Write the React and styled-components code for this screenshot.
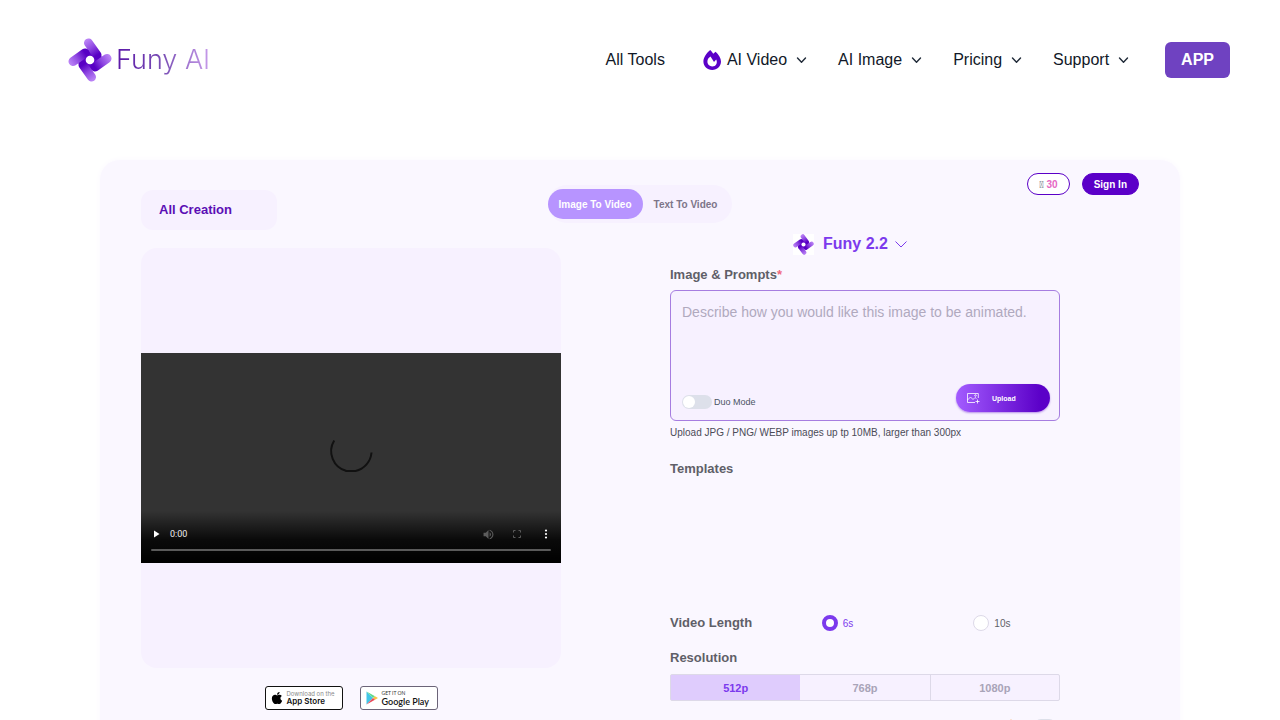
import React, { useId, useState } from 'react';
import styled, { createGlobalStyle } from 'styled-components';

const COLORS = {
  PURPLE: '#5b00c8',
  VIOLET: '#7c3aed',
  BUTTON: '#6f42c1',
  PANEL: '#faf7ff',
  CARD: '#f7f1ff',
  TEXT: '#111827',
  LABEL: '#5f5f68',
  MUTED: '#a9a4b8',
  LINE: '#ddd9e8',
};

const GlobalStyle = createGlobalStyle`
  *, *::before, *::after {
    box-sizing: border-box;
  }

  body {
    margin: 0;
    background: #fff;
    color: ${COLORS.TEXT};
    font-family: 'Liberation Sans', Arial, sans-serif;
  }

  button, input, textarea {
    font-family: inherit;
  }
`;

const Header = styled.header`
  display: flex;
  align-items: center;
  justify-content: space-between;
  height: 120px;
  padding: 0 50px 0 68px;
`;

const Brand = styled.a`
  display: flex;
  align-items: center;
  gap: 4px;
  text-decoration: none;
`;

const BrandName = styled.span`
  font-family: Inter, sans-serif;
  font-size: 27px;
  font-weight: 300;
  line-height: 36px;
  color: transparent;
  background: linear-gradient(90deg, #5a16a8, #7a4fb5 50%, #c79bea);
  background-clip: text;
`;

const Nav = styled.nav`
  display: flex;
  align-items: center;
  gap: 26px;
`;

const NavLink = styled.a`
  display: flex;
  align-items: center;
  gap: 5px;
  margin-right: ${({ $wide }) => ($wide ? '12px' : '0')};
  color: inherit;
  font-size: 16px;
  line-height: 24px;
  text-decoration: none;
`;

const AppButton = styled.button`
  height: 36px;
  margin-left: 5px;
  padding: 0 16px;
  border: 0;
  border-radius: 6px;
  background: ${COLORS.BUTTON};
  color: #fff;
  font-size: 16px;
  font-weight: 700;
`;

const Panel = styled.main`
  margin: 40px 100px 0;
  padding: 13px 41px 40px;
  border-radius: 20px;
  background: ${COLORS.PANEL};
  box-shadow: 0 0 6px ${COLORS.PANEL};
`;

const Toolbar = styled.div`
  display: grid;
  grid-template-columns: 1fr auto 1fr;
  align-items: start;
`;

const CreationTab = styled.button`
  justify-self: start;
  width: 136px;
  height: 40px;
  margin-top: 17px;
  padding: 0 18px 2px;
  border: 0;
  border-radius: 12px;
  background: ${COLORS.CARD};
  color: #5b0fb5;
  font-size: 13px;
  font-weight: 700;
  text-align: left;
`;

const ModeTabs = styled.div`
  display: flex;
  margin-top: 12px;
  padding: 4px 4px 4px 0;
  border-radius: 19px;
  background: ${COLORS.CARD};
`;

const ModeTab = styled.button`
  height: 30px;
  padding: 0 11px;
  border: 0;
  border-radius: 15px;
  background: ${({ $active }) => ($active ? '#b794ff' : 'transparent')};
  color: ${({ $active }) => ($active ? '#fff' : '#7d7589')};
  font-size: 10px;
  font-weight: 700;
`;

const Account = styled.div`
  display: flex;
  justify-self: end;
  gap: 12px;
`;

const Pill = styled.button`
  height: 22px;
  padding: 0 11px;
  border: 1px solid ${COLORS.PURPLE};
  border-radius: 11px;
  background: ${({ $filled }) => ($filled ? COLORS.PURPLE : '#fff')};
  color: ${({ $filled }) => ($filled ? '#fff' : '#4b5563')};
  font-size: 10px;
  font-weight: 700;
`;

const CoinGlyph = styled.span`
  font-family: Roboto, sans-serif;
  font-weight: 400;
`;

const Credits = styled.span`
  color: #e667c4;
`;

const Columns = styled.div`
  display: grid;
  grid-template-columns: 14fr 13fr;
  gap: 109px;
  padding-right: 79px;
`;

const Preview = styled.section`
  margin-top: 18px;
`;

const PreviewCard = styled.div`
  display: flex;
  align-items: center;
  aspect-ratio: 1;
  border-radius: 16px;
  background: ${COLORS.CARD};
`;

const Player = styled.div`
  position: relative;
  display: grid;
  place-items: center;
  width: 100%;
  aspect-ratio: 2;
  background: #333;
`;

const PlayerControls = styled.div`
  position: absolute;
  inset: auto 0 0;
  padding: 12px 10px;
  background: linear-gradient(transparent, rgba(0, 0, 0, 0.8) 55%, #000);
`;

const ControlRow = styled.div`
  display: flex;
  align-items: center;
  height: 22px;
`;

const ControlGroup = styled.div`
  display: flex;
  gap: 19px;
`;

const ControlButton = styled.button`
  display: flex;
  align-items: center;
  justify-content: center;
  width: 10px;
  height: 20px;
  padding: 0;
  border: 0;
  background: none;
  color: ${({ disabled }) => (disabled ? '#5c5c5c' : '#fff')};

  svg {
    flex: none;
  }
`;

const Time = styled.span`
  margin: 0 auto 0 9px;
  color: #eee;
  font-family: Roboto, sans-serif;
  font-size: 9px;
`;

const Seek = styled.input`
  display: block;
  width: 100%;
  height: 2px;
  margin: 4px 0 0;
  appearance: none;
  border-radius: 1px;
  background: #5a5a5a;

  &::-webkit-slider-thumb {
    appearance: none;
  }
`;

const Stores = styled.div`
  display: flex;
  justify-content: center;
  gap: 17px;
  margin-top: 18px;
`;

const StoreBadge = styled.a`
  display: flex;
  align-items: center;
  gap: 4px;
  width: 78px;
  height: 24px;
  padding: 0 5px;
  border: 1px solid ${({ $soft }) => ($soft ? '#6b6478' : '#111')};
  border-radius: 3px;
  background: #fff;
  color: #111;
  text-decoration: none;
`;

const StoreText = styled.span`
  display: flex;
  flex-direction: column;
  font-family: ${({ $soft }) => ($soft ? 'Lato' : 'Inter')}, sans-serif;
  font-size: ${({ $soft }) => ($soft ? '9px' : '8px')};
  font-weight: 600;
  line-height: 9px;
  white-space: nowrap;
`;

const StoreNote = styled.small`
  color: ${({ $soft }) => ($soft ? '#333' : '#8a8a8a')};
  font-size: ${({ $soft }) => ($soft ? '5px' : '6px')};
  font-weight: 400;
  line-height: 7px;
`;

const Form = styled.form`
  display: flex;
  flex-direction: column;
  padding-top: 3px;
`;

const ModelButton = styled.button`
  display: flex;
  align-items: center;
  align-self: center;
  height: 22px;
  margin: 0 30px 12px 0;
  padding: 0;
  border: 0;
  background: none;
  color: ${COLORS.VIOLET};
  font-size: 16px;
  font-weight: 700;

  svg:first-child {
    margin-right: 9px;
    background: #fff;
  }

  svg:last-child {
    margin-left: 7px;
  }
`;

const Label = styled.label`
  margin: 0;
  color: ${COLORS.LABEL};
  font-size: 13px;
  font-weight: 700;
  line-height: 16px;
`;

const Required = styled.span`
  color: #f0687c;
`;

const PromptBox = styled.div`
  margin-top: 7px;
  padding: 10px 9px 8px 11px;
  border: 1px solid #a67de0;
  border-radius: 6px;
  background: ${COLORS.CARD};
`;

const PromptInput = styled.textarea`
  display: block;
  width: 100%;
  height: 83px;
  padding: 0;
  border: 0;
  outline: 0;
  resize: none;
  background: none;
  color: ${COLORS.LABEL};
  font-size: 14px;
  line-height: 22px;

  &::placeholder {
    color: #b0a9be;
  }
`;

const PromptFooter = styled.div`
  display: flex;
  align-items: center;
  justify-content: space-between;
`;

const SwitchLabel = styled.label`
  display: flex;
  align-items: center;
  gap: 2px;
  padding-top: 8px;
  color: #4b5563;
  font-size: 9px;
`;

const Switch = styled.input`
  display: flex;
  width: ${({ $small }) => ($small ? '22px' : '30px')};
  height: 14px;
  margin: 0;
  padding: 1px;
  appearance: none;
  border-radius: 7px;
  background: #dde0ea;

  &::before {
    content: '';
    width: 12px;
    height: 12px;
    border-radius: 50%;
    background: #fff;
  }

  &:checked {
    justify-content: flex-end;
    background: ${COLORS.VIOLET};
  }
`;

const UploadButton = styled.button`
  display: flex;
  align-items: center;
  gap: 12px;
  width: 94px;
  height: 28px;
  padding: 0 10px;
  border: 0;
  border-radius: 14px;
  background: linear-gradient(90deg, #a35cff, ${COLORS.PURPLE} 90%);
  box-shadow: 0 1px 2px rgba(91, 0, 200, 0.4);
  color: #fff;
  font-size: 7px;
  font-weight: 700;
`;

const Hint = styled.p`
  margin: 6px 0 22px;
  color: #4b4b57;
  font-size: 10px;
  line-height: 12px;
`;

const TemplateList = styled.div`
  min-height: 138px;
`;

const LengthRow = styled.div`
  display: grid;
  grid-template-columns: 7fr 7fr 4fr;
  align-items: center;
  margin-bottom: 19px;
`;

const RadioLabel = styled.label`
  display: flex;
  align-items: center;
  gap: 5px;
  color: ${({ $active }) => ($active ? COLORS.VIOLET : '#5f5f68')};
  font-size: 10px;
`;

const Radio = styled.input`
  width: 16px;
  height: 16px;
  margin: 0;
  appearance: none;
  border: 1px solid ${COLORS.LINE};
  border-radius: 50%;
  background: #fff;

  &:checked {
    border: 4px solid ${COLORS.VIOLET};
  }
`;

const Segments = styled.div`
  display: grid;
  grid-template-columns: repeat(3, 1fr);
  height: 27px;
  margin-top: 8px;
  border: 1px solid ${COLORS.LINE};
  border-radius: 2px;
  background: ${COLORS.CARD};
`;

const Segment = styled.button`
  border: 0;
  border-left: ${({ $divided }) => ($divided ? `1px solid ${COLORS.LINE}` : '0')};
  background: ${({ $active }) => ($active ? '#dfccfd' : 'transparent')};
  color: ${({ $active }) => ($active ? COLORS.VIOLET : COLORS.MUTED)};
  font-size: 11px;
  font-weight: 700;
`;

const PremiumRow = styled.div`
  display: flex;
  align-items: center;
  justify-content: flex-end;
  gap: 16px;
  margin: 18px 4px 0 0;
`;

const BLADES = [0, 90, 180, 270];

const Pinwheel = ({ size }) => {
  const id = useId();

  return (
    <svg width={size} height={size} viewBox="-22 -22 44 44" aria-hidden="true">
      <defs>
        <linearGradient id={id} gradientUnits="userSpaceOnUse" x1="-3" y1="-20" x2="7" y2="-5">
          <stop offset="0" stopColor="#b981f5" />
          <stop offset="0.5" stopColor="#8f48e2" />
          <stop offset="1" stopColor="#5800c4" />
        </linearGradient>
      </defs>
      <path d="M-8 -8L3 -12L12 -3L8 8L-3 12L-12 3Z" fill="#5f04c8" />
      {BLADES.map((angle) => (
        <path
          key={angle}
          d="M-1.5 -17L7 -5"
          stroke={`url(#${id})`}
          strokeWidth="9"
          strokeLinecap="round"
          transform={`rotate(${angle})`}
        />
      ))}
      <circle r="4.3" fill="#fff" />
    </svg>
  );
};

const Chevron = () => (
  <svg width="20" height="20" viewBox="0 0 20 20" fill="none" aria-hidden="true">
    <path d="M5.5 8L9.5 12.2L13.5 8" stroke="#1f2937" strokeWidth="1.4" strokeLinecap="round" strokeLinejoin="round" />
  </svg>
);

const Flame = () => (
  <svg width="19" height="20" viewBox="0 0 19 20" aria-hidden="true">
    <path
      fill={COLORS.PURPLE}
      fillRule="evenodd"
      d="M7.2 0C8.4 1 9.400 2.300 10.200 3.700L12.600 1.800C15.700 4.600 18 8.300 18 11.500C18 16.300 14.200 20 9.200 20C4.200 20 .4 16.300 .4 11.500C.4 7.600 3.400 3.200 7.200 0ZM4.700 9.800C3.600 13.600 5.900 16.400 9.300 16.400C13 16.400 14.900 13 13.200 9.400L11 12L7.500 6.600C6.200 7.700 5.100 8.500 4.700 9.800Z"
    />
  </svg>
);

const Spinner = () => (
  <svg width="48" height="60" viewBox="0 0 48 60" fill="none" aria-hidden="true">
    <path
      d="M7.2 12.5A20.5 20.5 0 0 0 19.5 43M28.5 43A20.5 20.5 0 0 0 44.5 24.5M18.5 43H29.5"
      stroke="#111"
      strokeWidth="2"
    />
  </svg>
);

const PlayIcon = () => (
  <svg width="7" height="8" viewBox="0 0 7 8" aria-hidden="true">
    <path d="M1 .5L6.5 4L1 7.5Z" fill="currentColor" />
  </svg>
);

const VolumeIcon = () => (
  <svg width="11" height="11" viewBox="2 2 20 20" aria-hidden="true">
    <path
      fill="currentColor"
      d="M3 9v6h4l5 5V4L7 9H3zm13.5 3c0-1.77-1.02-3.29-2.5-4.03v8.05c1.48-.73 2.5-2.25 2.5-4.02zM14 3.23v2.06c2.89.86 5 3.54 5 6.71s-2.11 5.85-5 6.71v2.06c4.01-.91 7-4.49 7-8.77s-2.99-7.86-7-8.77z"
    />
  </svg>
);

const FullscreenIcon = () => (
  <svg width="8" height="8" viewBox="0 0 8 8" fill="none" aria-hidden="true">
    <path
      d="M.5 2.5V.5H2.500M5.500 .5H7.500V2.500M7.500 5.500V7.500H5.500M2.500 7.500H.5V5.500"
      stroke="currentColor"
    />
  </svg>
);

const MenuIcon = () => (
  <svg width="4" height="10" viewBox="0 0 4 10" fill="currentColor" aria-hidden="true">
    <circle cx="2" cy="1.5" r="1.1" />
    <circle cx="2" cy="5" r="1.1" />
    <circle cx="2" cy="8.5" r="1.1" />
  </svg>
);

const AppleIcon = () => (
  <svg width="12" height="14" viewBox="0 0 384 512" aria-hidden="true">
    <path d="M318.7 268.7c-.2-36.7 16.4-64.4 50-84.8-18.8-26.9-47.2-41.7-84.7-44.6-35.5-2.8-74.3 20.7-88.5 20.7-15 0-49.4-19.7-76.4-19.7C63.3 141.2 4 184.8 4 273.5q0 39.3 14.4 81.2c12.8 36.7 59 126.7 107.2 125.2 25.2-.6 43-17.9 75.8-17.9 31.8 0 48.3 17.9 76.400 17.900 48.600-.7 90.400-82.500 102.600-119.300-65.200-30.700-61.700-90-61.700-91.900zm-56.600-164.200c27.300-32.400 24.800-61.900 24-72.500-24.100 1.400-52 16.400-67.900 34.900-17.500 19.800-27.800 44.300-25.600 71.900 26.100 2 49.900-11.400 69.500-34.300z" />
  </svg>
);

const GooglePlayIcon = () => (
  <svg width="12" height="14" viewBox="0 0 12 14" aria-hidden="true">
    <path d="M.5 .5V13.5L7 7Z" fill="#42c6e8" />
    <path d="M.5 .5L9 5.2L7 7Z" fill="#5fd98b" />
    <path d="M9 5.2L12 7L9 8.8L7 7Z" fill="#f6c544" />
    <path d="M.5 13.5L9 8.8L7 7Z" fill="#ea4b5b" />
  </svg>
);

const UploadIcon = () => (
  <svg width="14" height="12" viewBox="0 0 14 12" fill="none" stroke="#fff" strokeWidth="0.8" aria-hidden="true">
    <path d="M12.3 6V1.5H1.5V10.5H9" />
    <path d="M1.5 8L4.5 5L7 7.5L9 5.5L10.5 6.5M11.500 7.500V11.500M9.500 9.500H13.500" />
    <circle cx="9.5" cy="3.5" r="0.8" />
  </svg>
);

const ModelChevron = () => (
  <svg width="12" height="8" viewBox="0 0 12 8" fill="none" aria-hidden="true">
    <path d="M.5 1.5L6 7L11.5 1.5" stroke="currentColor" />
  </svg>
);

const Crown = () => (
  <svg width="14" height="14" viewBox="0 0 14 14" aria-hidden="true">
    <path d="M7 0L9.5 5L13.5 3L12 12H2L.5 3L4.5 5Z" fill="#f5a65b" />
  </svg>
);

const RESOLUTIONS = ['512p', '768p', '1080p'];
const LENGTHS = ['6s', '10s'];
const MODES = ['Image To Video', 'Text To Video'];

const SiteHeader = () => (
  <Header>
    <Brand href="#">
      <Pinwheel size={44} />
      <BrandName>Funy AI</BrandName>
    </Brand>
    <Nav>
      <NavLink href="#" $wide>All Tools</NavLink>
      <NavLink href="#"><Flame />AI Video<Chevron /></NavLink>
      <NavLink href="#">AI Image<Chevron /></NavLink>
      <NavLink href="#">Pricing<Chevron /></NavLink>
      <NavLink href="#">Support<Chevron /></NavLink>
      <AppButton type="button">APP</AppButton>
    </Nav>
  </Header>
);

const VideoPreview = () => (
  <Preview>
    <PreviewCard>
      <Player>
        <Spinner />
        <PlayerControls>
          <ControlRow>
            <ControlButton type="button" aria-label="Play"><PlayIcon /></ControlButton>
            <Time>0:00</Time>
            <ControlGroup>
              <ControlButton type="button" aria-label="Mute" disabled><VolumeIcon /></ControlButton>
              <ControlButton type="button" aria-label="Full screen" disabled><FullscreenIcon /></ControlButton>
              <ControlButton type="button" aria-label="More options"><MenuIcon /></ControlButton>
            </ControlGroup>
          </ControlRow>
          <Seek type="range" aria-label="Seek" defaultValue={0} />
        </PlayerControls>
      </Player>
    </PreviewCard>
    <Stores>
      <StoreBadge href="#">
        <AppleIcon />
        <StoreText>
          <StoreNote>Download on the</StoreNote>
          App Store
        </StoreText>
      </StoreBadge>
      <StoreBadge href="#" $soft>
        <GooglePlayIcon />
        <StoreText $soft>
          <StoreNote $soft>GET IT ON</StoreNote>
          Google Play
        </StoreText>
      </StoreBadge>
    </Stores>
  </Preview>
);

const VideoForm = () => {
  const [length, setLength] = useState('6s');
  const [resolution, setResolution] = useState('512p');

  return (
    <Form>
      <ModelButton type="button">
        <Pinwheel size={21} />
        Funy 2.2
        <ModelChevron />
      </ModelButton>

      <Label htmlFor="prompt">Image &amp; Prompts<Required>*</Required></Label>
      <PromptBox>
        <PromptInput id="prompt" placeholder="Describe how you would like this image to be animated." />
        <PromptFooter>
          <SwitchLabel>
            <Switch type="checkbox" />
            Duo Mode
          </SwitchLabel>
          <UploadButton type="button"><UploadIcon />Upload</UploadButton>
        </PromptFooter>
      </PromptBox>
      <Hint>Upload JPG / PNG/ WEBP images up tp 10MB, larger than 300px</Hint>

      <Label as="h2">Templates</Label>
      <TemplateList />

      <LengthRow role="radiogroup" aria-labelledby="length">
        <Label as="span" id="length">Video Length</Label>
        {LENGTHS.map((item) => (
          <RadioLabel key={item} $active={item === length}>
            <Radio type="radio" name="length" checked={item === length} onChange={() => setLength(item)} />
            {item}
          </RadioLabel>
        ))}
      </LengthRow>

      <Label as="span">Resolution</Label>
      <Segments>
        {RESOLUTIONS.map((item, index) => (
          <Segment
            key={item}
            type="button"
            $active={item === resolution}
            $divided={index > 1}
            onClick={() => setResolution(item)}
          >
            {item}
          </Segment>
        ))}
      </Segments>

      <PremiumRow>
        <Crown />
        <Switch type="checkbox" aria-label="Premium" $small />
      </PremiumRow>
    </Form>
  );
};

const App = () => {
  const [mode, setMode] = useState(MODES[0]);

  return (
    <>
      <GlobalStyle />
      <SiteHeader />
      <Panel>
        <Toolbar>
          <CreationTab type="button">All Creation</CreationTab>
          <ModeTabs>
            {MODES.map((item) => (
              <ModeTab key={item} type="button" $active={item === mode} onClick={() => setMode(item)}>
                {item}
              </ModeTab>
            ))}
          </ModeTabs>
          <Account>
            <Pill type="button"><CoinGlyph>{'\uf51e'}</CoinGlyph> <Credits>30</Credits></Pill>
            <Pill type="button" $filled>Sign In</Pill>
          </Account>
        </Toolbar>
        <Columns>
          <VideoPreview />
          <VideoForm />
        </Columns>
      </Panel>
    </>
  );
};

export default App;
